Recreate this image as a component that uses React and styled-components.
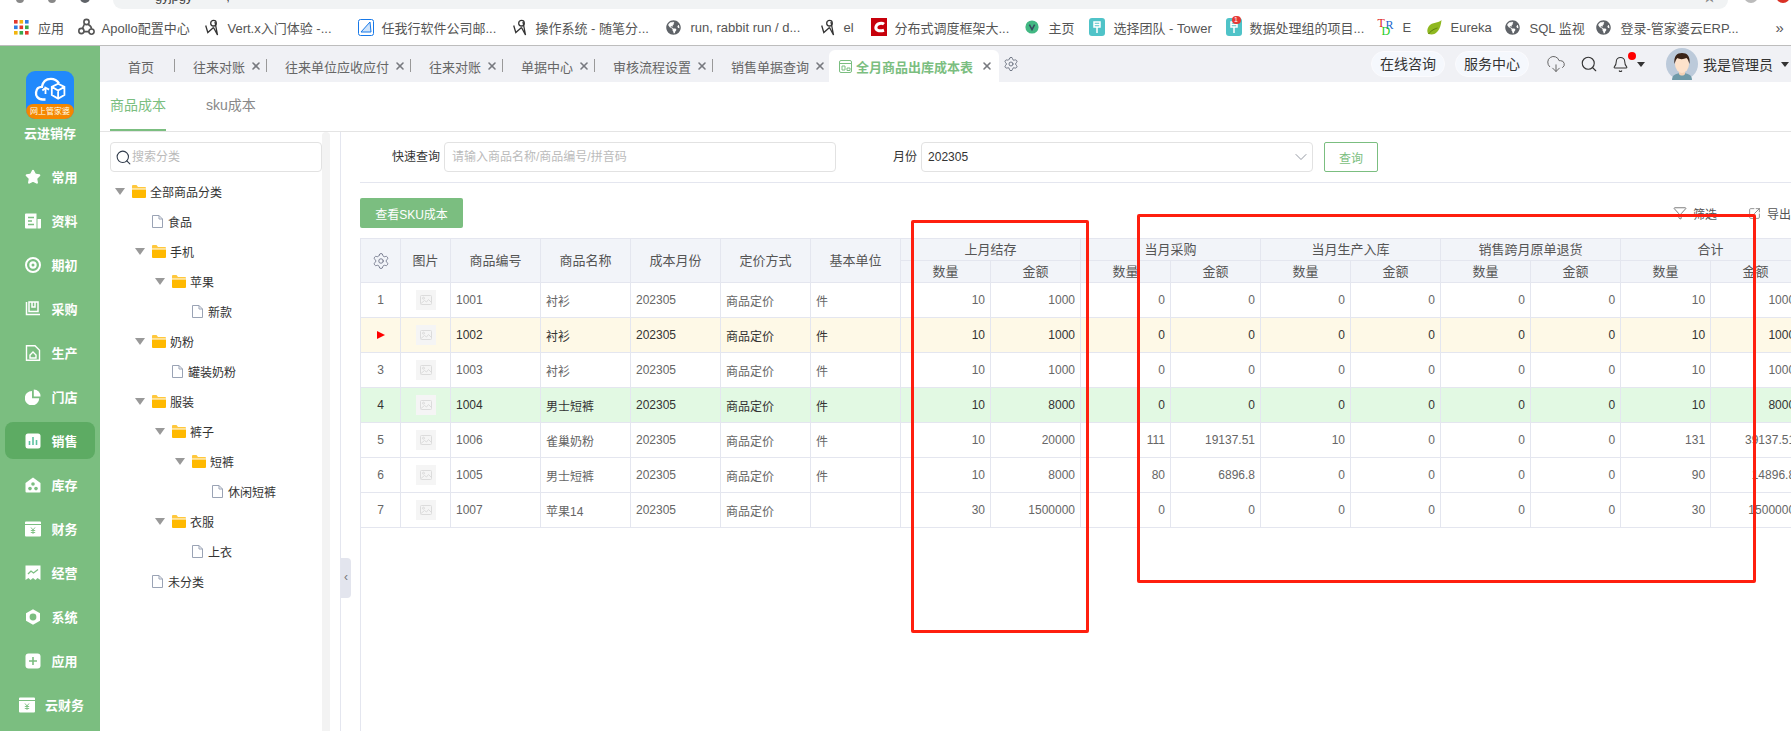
import React from "react";
import styled, { createGlobalStyle } from "styled-components";
import { ChevronDown, CloudDownload, Funnel, Search, Settings, SquareArrowOutUpRight, Star, X, Bell } from "lucide-react";
import { FaGlobeAmericas } from "react-icons/fa";

const GREEN = "#7bbe80";
const LINE = "#e4e6ef";

const GlobalStyle = createGlobalStyle`
  html, body { margin: 0; padding: 0; overflow: hidden; background: #fff; }
  body, input { font-family: "Liberation Sans", "Noto Sans CJK SC", sans-serif; }
  * { box-sizing: border-box; }
`;

const bookmarks = [
  { w: 63.5, icon: "grid", text: "应用", gap: 9 },
  { w: 127, icon: "apollo", text: "Apollo配置中心", gap: 7 },
  { w: 153, icon: "vert", text: "Vert.x入门体验 -...", gap: 9 },
  { w: 155, icon: "mail", text: "任我行软件公司邮...", gap: 8 },
  { w: 153, icon: "vert", text: "操作系统 - 随笔分...", gap: 9 },
  { w: 155, icon: "globe", text: "run, rabbit run / d...", gap: 10 },
  { w: 50, icon: "vert", text: "el", gap: 9 },
  { w: 154, icon: "csdn", text: "分布式调度框架大...", gap: 8 },
  { w: 64, icon: "vue", text: "主页", gap: 10 },
  { w: 137, icon: "tower", text: "选择团队 - Tower", gap: 9 },
  { w: 152, icon: "towerBadge", text: "数据处理组的项目...", gap: 8 },
  { w: 48, icon: "tbd", text: "E", gap: 9 },
  { w: 79, icon: "leaf", text: "Eureka", gap: 9 },
  { w: 91, icon: "globe", text: "SQL 监视", gap: 10 },
  { w: 177, icon: "globe", text: "登录-管家婆云ERP...", gap: 10 },
];

const BookmarkIcon = ({ name }) => {
  if (name === "globe") return <FaGlobeAmericas size={15} color="#5f6368" />;
  if (name === "grid") {
    const colors = ["#e3382c", "#f2b50f", "#2f7de1", "#2f7de1", "#e3382c", "#38a84b", "#f2b50f", "#38a84b", "#e3382c"];
    return (
      <svg width="15" height="15" viewBox="0 0 15 15">
        {colors.map((c, i) => (
          <rect key={i} x={(i % 3) * 5.5} y={Math.floor(i / 3) * 5.5} width="3.6" height="3.6" fill={c} />
        ))}
      </svg>
    );
  }
  if (name === "apollo") {
    return (
      <svg width="17" height="18" viewBox="0 0 17 18" fill="none" stroke="#555" strokeWidth="1.6">
        <circle cx="8.5" cy="4" r="2.6" />
        <circle cx="3.4" cy="13" r="2.6" />
        <circle cx="13.5" cy="13.6" r="2.6" />
        <path d="M6.5 6 4.4 10.6M10 6.3c2.6 1.4 3.6 3.4 3.500 4.800M6 13.600h5" />
      </svg>
    );
  }
  if (name === "vert") {
    return (
      <svg width="14" height="17" viewBox="0 0 14 17" fill="none" stroke="#333" strokeWidth="1.3">
        <path d="M.7 6.500 2.800 13.500 8.500 8.500M8.500 8.500 12.500 16 10 3" />
        <circle cx="8.500" cy="4.200" r="2.800" />
      </svg>
    );
  }
  if (name === "mail") {
    return (
      <svg width="16" height="17" viewBox="0 0 16 17">
        <rect x=".5" y=".5" width="15" height="16" rx="2" fill="#fff" stroke="#1778e8" />
        <path d="M3 13 12 3l1 10z" fill="#cfe4fb" stroke="#1778e8" />
      </svg>
    );
  }
  if (name === "csdn") {
    return (
      <svg width="16" height="18" viewBox="0 0 16 18">
        <rect width="16" height="18" fill="#c7000b" />
        <path d="M13 6.200C11 4.600 6 5 5 8.600s3 5.200 8 3.600" fill="none" stroke="#fff" strokeWidth="3" />
      </svg>
    );
  }
  if (name === "vue") {
    return (
      <svg width="14" height="14" viewBox="0 0 14 14">
        <circle cx="7" cy="7" r="6.600" fill="#42b883" />
        <path d="M4.400 4.600 7 9.600l2.600-5" fill="none" stroke="#35495e" strokeWidth="1.500" />
      </svg>
    );
  }
  if (name === "tower" || name === "towerBadge") {
    return (
      <Badged>
        <svg width="16" height="18" viewBox="0 0 16 18">
          <rect width="16" height="18" rx="3" fill="#4fc3c8" />
          <path d="M5 4h6v5H5zM8 9v6M5.500 6.500h5" fill="none" stroke="#fff" strokeWidth="1.500" />
        </svg>
        {name === "towerBadge" && <IconBadge>1</IconBadge>}
      </Badged>
    );
  }
  if (name === "tbd") {
    return (
      <TbdLogo>
        <TbdLetter $color="#e02020" $x={0} $y={0}>T</TbdLetter>
        <TbdLetter $color="#2266cc" $x={8} $y={2}>R</TbdLetter>
        <TbdLetter $color="#22cc22" $x={4} $y={8}>D</TbdLetter>
      </TbdLogo>
    );
  }
  if (name === "leaf") {
    return (
      <svg width="16" height="17" viewBox="0 0 16 17">
        <path d="M15.500 1C13 4 6 3 3 7 .8 10 1 13.500 2.500 15c6 2 12-2 13-14z" fill="#8fb820" />
        <path d="M2.500 15c3-4 6-5 9-6" fill="none" stroke="#5d7c10" strokeWidth="1" />
      </svg>
    );
  }
  return null;
};

const navItems = [
  { label: "常用", icon: "star" },
  { label: "资料", icon: "doc" },
  { label: "期初", icon: "disc" },
  { label: "采购", icon: "book" },
  { label: "生产", icon: "house" },
  { label: "门店", icon: "pie" },
  { label: "销售", icon: "bars", active: true },
  { label: "库存", icon: "store" },
  { label: "财务", icon: "money" },
  { label: "经营", icon: "ribbon" },
  { label: "系统", icon: "hex" },
  { label: "应用", icon: "plus" },
  { label: "云财务", icon: "money" },
];

const NavIcon = ({ name }) => {
  const common = { width: 16, height: 16, viewBox: "0 0 16 16", style: { flexShrink: 0 } };
  switch (name) {
    case "star":
      return <Star size={16} fill="#fff" color="#fff" style={{ flexShrink: 0 }} />;
    case "doc":
      return (
        <svg {...common}>
          <path d="M0 1.500A1 1 0 0 1 1 .5h10.500v15H1a1 1 0 0 1-1-1zM12.500 6H16v8.500a1 1 0 0 1-1 1h-2.500z" fill="#fff" />
          <path d="M3 4.500h6M3 8h4M3 11.500h6" stroke={GREEN} strokeWidth="1.400" />
        </svg>
      );
    case "disc":
      return (
        <svg {...common} fill="none" stroke="#fff">
          <circle cx="8" cy="8" r="7" strokeWidth="2" />
          <circle cx="8" cy="8" r="2.600" strokeWidth="2.200" />
        </svg>
      );
    case "book":
      return (
        <svg {...common} fill="none" stroke="#fff" strokeWidth="1.500">
          <path d="M1.500 1v12.500H15M4 1h9v9.500H4z" />
          <path d="M7 1v5h3V1" />
        </svg>
      );
    case "house":
      return (
        <svg {...common} fill="none" stroke="#fff" strokeWidth="1.400">
          <path d="M1.500.8h8.500l4.500 4.500v9.900h-13z" />
          <path d="M5 10l3-3 3 3v3H5z" />
        </svg>
      );
    case "pie":
      return (
        <svg {...common} fill="#fff">
          <path d="M7 2v7.200h7.200A7.200 7.200 0 1 1 7 2z" />
          <path d="M8.800.4A7 7 0 0 1 15.600 7.400H8.800z" />
        </svg>
      );
    case "bars":
      return (
        <svg {...common}>
          <rect x=".5" y=".5" width="15" height="15" rx="2.500" fill="#fff" />
          <path d="M4.500 12V8M8 12V4M11.500 12V7" stroke="#5cc2a0" strokeWidth="1.600" />
        </svg>
      );
    case "store":
      return (
        <svg {...common}>
          <path d="M8 .6 15.500 6v8.400a1 1 0 0 1-1 1h-13a1 1 0 0 1-1-1V6z" fill="#fff" />
          <circle cx="8" cy="7" r="1.800" fill={GREEN} />
          <circle cx="5" cy="11.600" r="1.800" fill={GREEN} />
          <circle cx="11" cy="11.600" r="1.800" fill={GREEN} />
        </svg>
      );
    case "money":
      return (
        <svg {...common}>
          <path d="M0 1.500a1 1 0 0 1 1-1h14a1 1 0 0 1 1 1V3H0zM0 4h16v10.500a1 1 0 0 1-1 1H1a1 1 0 0 1-1-1z" fill="#fff" />
          <path d="M6 6.500 8 9l2-2.500M5.800 9.500h4.400M5.800 11.500h4.400M8 9v4" stroke={GREEN} strokeWidth=".9" fill="none" />
        </svg>
      );
    case "ribbon":
      return (
        <svg {...common}>
          <path d="M.5.5h15V15l-3-2-2 2-2.500-2-2.500 2-2-2-3 2z" fill="#fff" />
          <path d="M3 9l3-3 2.500 2L13 4.500" stroke={GREEN} strokeWidth="1.300" fill="none" />
        </svg>
      );
    case "hex":
      return (
        <svg {...common}>
          <path d="M8 .3 15 4.200v7.600L8 15.700 1 11.800V4.200z" fill="#fff" />
          <circle cx="8" cy="8" r="3.400" fill={GREEN} />
        </svg>
      );
    case "plus":
      return (
        <svg {...common}>
          <rect x=".5" y=".5" width="15" height="15" rx="3" fill="#fff" />
          <path d="M8 4v8M4 8h8" stroke={GREEN} strokeWidth="1.600" />
        </svg>
      );
    default:
      return null;
  }
};

const tabs = [
  { label: "首页", plain: true },
  { label: "往来对账" },
  { label: "往来单位应收应付" },
  { label: "往来对账" },
  { label: "单据中心" },
  { label: "审核流程设置" },
  { label: "销售单据查询", last: true },
];

const tree = [
  { label: "全部商品分类", level: 0, folder: true },
  { label: "食品", level: 1 },
  { label: "手机", level: 1, folder: true },
  { label: "苹果", level: 2, folder: true },
  { label: "新款", level: 3 },
  { label: "奶粉", level: 1, folder: true },
  { label: "罐装奶粉", level: 2 },
  { label: "服装", level: 1, folder: true },
  { label: "裤子", level: 2, folder: true },
  { label: "短裤", level: 3, folder: true },
  { label: "休闲短裤", level: 4 },
  { label: "衣服", level: 2, folder: true },
  { label: "上衣", level: 3 },
  { label: "未分类", level: 1 },
];

const groups = ["上月结存", "当月采购", "当月生产入库", "销售跨月原单退货", "合计"];

const rows = [
  { no: "1", code: "1001", name: "衬衫", unit: "件", nums: [10, 1000, 0, 0, 0, 0, 0, 0, 10, 1000] },
  { no: "2", code: "1002", name: "衬衫", unit: "件", nums: [10, 1000, 0, 0, 0, 0, 0, 0, 10, 1000], tone: "current" },
  { no: "3", code: "1003", name: "衬衫", unit: "件", nums: [10, 1000, 0, 0, 0, 0, 0, 0, 10, 1000] },
  { no: "4", code: "1004", name: "男士短裤", unit: "件", nums: [10, 8000, 0, 0, 0, 0, 0, 0, 10, 8000], tone: "picked" },
  { no: "5", code: "1006", name: "雀巢奶粉", unit: "件", nums: [10, 20000, 111, 19137.51, 10, 0, 0, 0, 131, 39137.51] },
  { no: "6", code: "1005", name: "男士短裤", unit: "件", nums: [10, 8000, 80, 6896.8, 0, 0, 0, 0, 90, 14896.8] },
  { no: "7", code: "1007", name: "苹果14", unit: "", nums: [30, 1500000, 0, 0, 0, 0, 0, 0, 30, 1500000] },
];

const FolderIcon = () => (
  <svg width="14" height="13" viewBox="0 0 14 13" style={{ flexShrink: 0 }}>
    <path d="M0 1a1 1 0 0 1 1-1h3.500l1.500 2h7a1 1 0 0 1 1 1v.5H0z" fill="#ffc83d" />
    <path d="M0 4.500h14V12a1 1 0 0 1-1 1H1a1 1 0 0 1-1-1z" fill="#ffb900" />
  </svg>
);

const FileIcon = () => (
  <svg width="11" height="13" viewBox="0 0 11 13" fill="none" stroke="#9aa3b5" style={{ flexShrink: 0 }}>
    <path d="M.5.5h6.500l3.500 3.500v8.500h-10z" />
    <path d="M7 .5V4h3.500" />
  </svg>
);

const ThumbIcon = () => (
  <svg width="12" height="10" viewBox="0 0 12 10" fill="none" stroke="#dcdcdc">
    <rect x=".5" y=".5" width="11" height="9" rx="1" />
    <circle cx="3.500" cy="3.200" r="1" />
    <path d="M1 8.500 4.500 5.500 6.500 7 8.500 4.500 11 7" />
  </svg>
);

const Avatar = () => (
  <svg width="32" height="32" viewBox="0 0 32 32">
    <circle cx="16" cy="16" r="16" fill="#bccada" />
    <path d="M6 32c0-5 4-7 10-7s10 2 10 7z" fill="#6f9aa8" />
    <path d="M13 21h6v5c-1 2-5 2-6 0z" fill="#f3d2b6" />
    <ellipse cx="16" cy="16" rx="7" ry="9" fill="#fde2cb" />
    <path d="M8.500 16C7.500 8 11 5 16 5s8.500 3 7.500 11c-1-3-1.500-5-3-6-3 1.500-7 1.500-9 0-1.500 1-2 3-3 6z" fill="#3a2418" />
  </svg>
);

const Logo = () => (
  <LogoBox>
    <svg width="36" height="30" viewBox="0 0 36 30" fill="none" stroke="#fff" strokeWidth="2.600">
      <path d="M13 25H10C4 25 2 20.500 2.500 17 3 13 6 11 9 11 10 5 14 2 19 2c4 0 7 2 9 5" />
      <path d="M20 11l7-3.500 7 3.500v9l-7 4-7-4zM20 11l7 4 7-4M27 15v9" strokeWidth="2" />
      <path d="M13 19v-7l4 2M13 12l-3.500 3" strokeWidth="2" />
    </svg>
    <LogoBand>网上管家婆</LogoBand>
  </LogoBox>
);

export default function App() {
  return (
    <Page>
      <GlobalStyle />
      <TopStrip>
        <CutDot $left={16} $size={8} />
        <CutDot $left={24} $size={8} />
        <CutDot $left={24} $size={10} $color="#5f6368" />
        <AddressBar>
          <UrlCrumb>gyjpgy ,</UrlCrumb>
          <AddressStar>★</AddressStar>
        </AddressBar>
        <CutDot $left={16} $size={14} $color="#bbb" />
        <CutDot $left={18} $size={14} $color="#d93025" />
      </TopStrip>

      <BookmarkBar>
        {bookmarks.map((b, i) => (
          <Bookmark key={i} $width={b.w} $gap={b.gap}>
            <BookmarkIcon name={b.icon} />
            <span>{b.text}</span>
          </Bookmark>
        ))}
        <MoreMarks>»</MoreMarks>
      </BookmarkBar>

      <AppBody>
        <Sidebar>
          <Logo />
          <AppTitle>云进销存</AppTitle>
          <NavList>
            {navItems.map((item) => (
              <NavItem key={item.label} $active={item.active}>
                <NavIcon name={item.icon} />
                <span>{item.label}</span>
              </NavItem>
            ))}
          </NavList>
        </Sidebar>

        <Workspace>
          <TabBar>
            {tabs.map((t, i) => (
              <Tab key={i} $plain={t.plain} $last={t.last}>
                <span>{t.label}</span>
                {!t.plain && <TabClose />}
              </Tab>
            ))}
            <ActiveTab>
              <svg width="13" height="14" viewBox="0 0 13 14" fill="none" stroke={GREEN}>
                <rect x=".5" y="1.500" width="12" height="12" rx="1.500" />
                <path d="M.5 4.500h12M3 7h3v4H3zM8 9h3v2.500H8z" />
              </svg>
              <span>全月商品出库成本表</span>
              <TabClose />
            </ActiveTab>
            <TabGear>
              <Settings size={16} color="#6a7280" strokeWidth={1.4} />
            </TabGear>
            <HeaderTools>
              <PillButton>在线咨询</PillButton>
              <PillButton>服务中心</PillButton>
              <ToolIcon $ml={17}>
                <CloudDownload size={20} color="#666" strokeWidth={1.2} />
              </ToolIcon>
              <ToolIcon $ml={14}>
                <Search size={18} color="#333" strokeWidth={1.5} />
              </ToolIcon>
              <ToolIcon $ml={14}>
                <Bell size={17} color="#333" strokeWidth={1.5} />
                <RedDot />
              </ToolIcon>
              <Caret $ml={8} />
              <AvatarWrap>
                <Avatar />
              </AvatarWrap>
              <UserName>我是管理员</UserName>
              <Caret $ml={8} />
            </HeaderTools>
          </TabBar>

          <SubTabs>
            <SubTab $active>商品成本</SubTab>
            <SubTab>sku成本</SubTab>
          </SubTabs>

          <Columns>
            <TreePanel>
              <TreeInner>
                <TreeSearch>
                  <Search size={17} color="#2f3a4a" strokeWidth={1.5} />
                  <TreeSearchInput placeholder="搜索分类" />
                </TreeSearch>
                <TreeList>
                  {tree.map((node, i) => (
                    <TreeRow key={i} $level={node.level}>
                      {node.folder ? (
                        <>
                          <Toggle>
                            <ToggleArrow />
                          </Toggle>
                          <FolderIcon />
                          <FolderLabel>{node.label}</FolderLabel>
                        </>
                      ) : (
                        <>
                          <Toggle />
                          <FileIcon />
                          <LeafLabel>{node.label}</LeafLabel>
                        </>
                      )}
                    </TreeRow>
                  ))}
                </TreeList>
              </TreeInner>
              <TreeScroll />
              <CollapseHandle>‹</CollapseHandle>
            </TreePanel>

            <Main>
              <QueryRow>
                <QueryLabel $ml={51}>快速查询</QueryLabel>
                <QueryInput placeholder="请输入商品名称/商品编号/拼音码" />
                <QueryLabel $ml={57}>月份</QueryLabel>
                <MonthSelect>
                  <span>202305</span>
                  <ChevronDown size={20} color="#8a8f99" strokeWidth={1.1} />
                </MonthSelect>
                <QueryButton>查询</QueryButton>
              </QueryRow>

              <Toolbar>
                <PrimaryButton>查看SKU成本</PrimaryButton>
                <ToolLinks>
                  <ToolLink>
                    <Funnel size={14} color="#555" strokeWidth={1.3} />
                    筛选
                  </ToolLink>
                  <ToolLink>
                    <SquareArrowOutUpRight size={13} color="#666" strokeWidth={1.3} />
                    导出
                  </ToolLink>
                </ToolLinks>
              </Toolbar>

              <TableWrap>
                <CostTable>
                  <colgroup>
                    <col width="40" />
                    <col width="50" />
                    {Array.from({ length: 15 }).map((_, i) => (
                      <col key={i} width="90" />
                    ))}
                  </colgroup>
                  <thead>
                    <tr>
                      <HeadCell rowSpan={2}>
                        <Settings size={18} color="#6f7488" strokeWidth={1.2} />
                      </HeadCell>
                      <HeadCell rowSpan={2}>图片</HeadCell>
                      <HeadCell rowSpan={2}>商品编号</HeadCell>
                      <HeadCell rowSpan={2}>商品名称</HeadCell>
                      <HeadCell rowSpan={2}>成本月份</HeadCell>
                      <HeadCell rowSpan={2}>定价方式</HeadCell>
                      <HeadCell rowSpan={2}>基本单位</HeadCell>
                      {groups.map((g) => (
                        <HeadCell key={g} colSpan={2}>
                          {g}
                        </HeadCell>
                      ))}
                    </tr>
                    <tr>
                      {groups.map((g) => (
                        <React.Fragment key={g}>
                          <HeadCell>数量</HeadCell>
                          <HeadCell>金额</HeadCell>
                        </React.Fragment>
                      ))}
                    </tr>
                  </thead>
                  <tbody>
                    {rows.map((r) => (
                      <DataRow key={r.code} $tone={r.tone}>
                        <NoCell>{r.tone === "current" ? <CurrentMark /> : r.no}</NoCell>
                        <NoCell>
                          <Thumb>
                            <ThumbIcon />
                          </Thumb>
                        </NoCell>
                        <TextCell>{r.code}</TextCell>
                        <TextCell>{r.name}</TextCell>
                        <TextCell>202305</TextCell>
                        <TextCell>商品定价</TextCell>
                        <TextCell>{r.unit}</TextCell>
                        {r.nums.map((n, i) => (
                          <NumCell key={i}>{n}</NumCell>
                        ))}
                      </DataRow>
                    ))}
                  </tbody>
                </CostTable>
              </TableWrap>
            </Main>
          </Columns>
        </Workspace>
      </AppBody>

      <RedFrame $x={911} $y={220} $w={178} $h={413} />
      <RedFrame $x={1137} $y={214} $w={619} $h={369} />
    </Page>
  );
}

const CloseGlyph = styled(X)`
  flex-shrink: 0;
  margin: 0 -0.5px;
`;

const TabClose = () => <CloseGlyph size={12} strokeWidth={3.2} color="#77797f" />;

const Page = styled.div`
  position: relative;
  width: 1791px;
  height: 731px;
  overflow: hidden;
  display: flex;
  flex-direction: column;
  background: #fff;
`;

const TopStrip = styled.div`
  height: 9px;
  display: flex;
  overflow: hidden;
  flex-shrink: 0;
`;

const CutDot = styled.div`
  width: ${(p) => p.$size}px;
  height: ${(p) => p.$size}px;
  margin-left: ${(p) => p.$left}px;
  margin-top: ${(p) => 3 - p.$size}px;
  border-radius: 50%;
  background: ${(p) => p.$color || "#888"};
  flex-shrink: 0;
`;

const AddressBar = styled.div`
  width: 1615px;
  margin-left: 23px;
  height: 9px;
  background: #f1f3f4;
  border-radius: 0 0 12px 12px;
  display: flex;
  justify-content: space-between;
  overflow: hidden;
  padding: 0 12px 0 42px;
  flex-shrink: 0;
`;

const UrlCrumb = styled.span`
  margin-top: -10px;
  font-size: 13px;
  line-height: 13px;
  color: #444;
  word-spacing: 30px;
`;

const AddressStar = styled.span`
  margin-top: -10px;
  font-size: 13px;
  line-height: 13px;
  color: #888;
`;

const BookmarkBar = styled.div`
  height: 37px;
  padding-left: 14px;
  display: flex;
  align-items: center;
  border-bottom: 1px solid #bdbdbd;
  flex-shrink: 0;
`;

const Bookmark = styled.div`
  width: ${(p) => p.$width}px;
  display: flex;
  align-items: center;
  gap: ${(p) => p.$gap}px;
  font-size: 13px;
  color: #555;
  white-space: nowrap;
  flex-shrink: 0;
`;

const Badged = styled.div`
  position: relative;
  height: 18px;
`;

const IconBadge = styled.span`
  position: absolute;
  top: -2px;
  right: 1px;
  width: 9px;
  height: 8px;
  border-radius: 4px;
  background: #e53935;
  color: #fff;
  font-size: 7px;
  line-height: 8px;
  text-align: center;
`;

const TbdLogo = styled.div`
  position: relative;
  width: 16px;
  height: 18px;
`;

const TbdLetter = styled.span`
  position: absolute;
  left: ${(p) => p.$x}px;
  top: ${(p) => p.$y}px;
  font-family: "Liberation Serif", serif;
  font-size: 12px;
  line-height: 10px;
  color: ${(p) => p.$color};
`;

const MoreMarks = styled.div`
  margin-left: 3px;
  font-size: 15px;
  color: #555;
`;

const AppBody = styled.div`
  flex: 1;
  display: flex;
  min-height: 0;
`;

const Sidebar = styled.aside`
  width: 100px;
  flex-shrink: 0;
  background: ${GREEN};
  padding-top: 25px;
  display: flex;
  flex-direction: column;
  align-items: center;
`;

const LogoBox = styled.div`
  width: 48px;
  height: 48px;
  border-radius: 9px;
  background: #2189fb;
  overflow: hidden;
  display: flex;
  flex-direction: column;
  align-items: center;
  justify-content: space-between;
  padding-top: 6px;
`;

const LogoBand = styled.div`
  width: 100%;
  height: 15px;
  background: #f58700;
  border-radius: 7px 7px 0 0;
  color: #ffe;
  font-size: 8px;
  line-height: 15px;
  text-align: center;
  white-space: nowrap;
`;

const AppTitle = styled.div`
  margin-top: 5px;
  height: 20px;
  font-size: 13px;
  line-height: 20px;
  font-weight: 700;
  color: #fff;
`;

const NavList = styled.nav`
  margin-top: 14px;
  width: 100%;
  padding: 0 5px;
  display: flex;
  flex-direction: column;
  gap: 7px;
`;

const NavItem = styled.div`
  height: 37px;
  padding-left: 3px;
  display: flex;
  align-items: center;
  justify-content: center;
  gap: 10px;
  border-radius: 8px;
  font-size: 13px;
  font-weight: 700;
  color: #fff;
  background: ${(p) => (p.$active ? "#5dab63" : "transparent")};
`;

const Workspace = styled.div`
  flex: 1;
  min-width: 0;
  display: flex;
  flex-direction: column;
`;

const TabBar = styled.div`
  height: 36px;
  background: #f0f1f5;
  display: flex;
  align-items: flex-end;
  padding-left: 10px;
  flex-shrink: 0;
`;

const Tab = styled.div`
  height: 32px;
  display: flex;
  align-items: center;
  gap: 5px;
  padding-left: 18px;
  padding-right: ${(p) => (p.$plain ? 21 : 6)}px;
  font-size: 13px;
  color: #666;
  position: relative;
  white-space: nowrap;
  &::after {
    content: "";
    display: ${(p) => (p.$last ? "none" : "block")};
    position: absolute;
    right: 0;
    top: 9px;
    height: 13px;
    width: 1px;
    background: #999;
  }
`;

const ActiveTab = styled.div`
  height: 32px;
  width: 170px;
  margin-left: -2px;
  padding-left: 10px;
  background: #fff;
  border-radius: 6px 6px 0 0;
  display: flex;
  align-items: center;
  font-size: 13px;
  color: ${GREEN};
  white-space: nowrap;
  & > span {
    margin: 0 8px 0 4px;
    font-weight: 700;
  }
`;

const TabGear = styled.div`
  margin-left: 4px;
  height: 36px;
  display: flex;
  align-items: center;
`;

const HeaderTools = styled.div`
  margin-left: auto;
  height: 36px;
  display: flex;
  align-items: center;
  padding-right: 2px;
`;

const PillButton = styled.div`
  width: 74px;
  height: 26px;
  margin-left: 10px;
  border-radius: 13px;
  background: #f5f8fd;
  border: 1px solid #fbfbfe;
  font-size: 14px;
  line-height: 24px;
  text-align: center;
  color: #333;
`;

const ToolIcon = styled.div`
  position: relative;
  margin-left: ${(p) => p.$ml}px;
  display: flex;
`;

const RedDot = styled.span`
  position: absolute;
  top: -4px;
  right: -7px;
  width: 8px;
  height: 8px;
  border-radius: 50%;
  background: #f00;
`;

const Caret = styled.span`
  margin-left: ${(p) => p.$ml}px;
  width: 0;
  height: 0;
  border-left: 4px solid transparent;
  border-right: 4px solid transparent;
  border-top: 5px solid #333;
`;

const AvatarWrap = styled.div`
  margin-left: 21px;
  width: 32px;
  height: 32px;
`;

const UserName = styled.div`
  margin-left: 5px;
  font-size: 14px;
  color: #333;
`;

const SubTabs = styled.div`
  height: 50px;
  padding-left: 10px;
  display: flex;
  gap: 40px;
  border-bottom: 1px solid #e4e4e4;
  flex-shrink: 0;
`;

const SubTab = styled.div`
  height: 49px;
  line-height: 46px;
  font-size: 14px;
  color: ${(p) => (p.$active ? GREEN : "#888")};
  border-bottom: 2px solid ${(p) => (p.$active ? GREEN : "transparent")};
`;

const Columns = styled.div`
  flex: 1;
  display: flex;
  min-height: 0;
`;

const TreePanel = styled.div`
  position: relative;
  width: 241px;
  flex-shrink: 0;
  display: flex;
  border-right: 1px solid ${LINE};
`;

const TreeInner = styled.div`
  width: 222px;
  padding: 10px 0 0 10px;
`;

const TreeSearch = styled.div`
  height: 30px;
  display: flex;
  align-items: center;
  padding-left: 4px;
  border: 1px solid #e2e2e2;
  border-radius: 4px;
`;

const TreeSearchInput = styled.input`
  flex: 1;
  min-width: 0;
  border: 0;
  outline: 0;
  padding: 0;
  font-size: 12px;
  background: transparent;
  &::placeholder {
    color: #bbb;
  }
`;

const TreeList = styled.div`
  margin-top: 4px;
  padding-left: 5px;
`;

const TreeRow = styled.div`
  height: 30px;
  padding-left: ${(p) => p.$level * 20}px;
  display: flex;
  align-items: center;
  font-size: 12px;
  color: #333;
  white-space: nowrap;
`;

const Toggle = styled.span`
  width: 17px;
  flex-shrink: 0;
`;

const ToggleArrow = styled.span`
  display: block;
  width: 0;
  height: 0;
  border-left: 5px solid transparent;
  border-right: 5px solid transparent;
  border-top: 7px solid #999;
`;

const FolderLabel = styled.span`
  margin-left: 4px;
`;

const LeafLabel = styled.span`
  margin-left: 5px;
`;

const TreeScroll = styled.div`
  width: 8px;
  background: #f3f3f3;
  border-radius: 4px 4px 0 0;
`;

const CollapseHandle = styled.div`
  position: absolute;
  right: -11px;
  top: 426px;
  width: 10px;
  height: 40px;
  border-radius: 0 4px 4px 0;
  background: #e3e5ee;
  color: #777;
  font-size: 12px;
  line-height: 38px;
  text-align: center;
`;

const Main = styled.main`
  flex: 1;
  min-width: 0;
  padding-left: 19px;
  display: flex;
  flex-direction: column;
`;

const QueryRow = styled.div`
  height: 51px;
  margin-left: -19px;
  padding-top: 10px;
  display: flex;
  align-items: flex-start;
  position: relative;
  &::after {
    content: "";
    position: absolute;
    left: 19px;
    right: 0;
    bottom: 0;
    height: 1px;
    background: ${LINE};
  }
`;

const QueryLabel = styled.label`
  margin-left: ${(p) => p.$ml}px;
  margin-right: 4px;
  font-size: 12px;
  line-height: 30px;
  color: #333;
`;

const QueryInput = styled.input`
  width: 392px;
  height: 30px;
  padding: 0 7px;
  border: 1px solid #e2e2e2;
  border-radius: 4px;
  outline: 0;
  font-size: 12px;
  &::placeholder {
    color: #bbb;
  }
`;

const MonthSelect = styled.div`
  width: 392px;
  height: 30px;
  padding: 0 1px 0 6px;
  display: flex;
  align-items: center;
  justify-content: space-between;
  border: 1px solid #e2e2e2;
  border-radius: 4px;
  font-size: 12px;
  color: #333;
`;

const QueryButton = styled.button`
  width: 54px;
  height: 30px;
  margin-left: 11px;
  border: 1px solid ${GREEN};
  border-radius: 2px;
  background: #fff;
  color: ${GREEN};
  font: inherit;
  font-size: 12px;
`;

const Toolbar = styled.div`
  margin-top: 15px;
  height: 30px;
  display: flex;
  align-items: center;
  justify-content: space-between;
  flex-shrink: 0;
`;

const PrimaryButton = styled.button`
  width: 103px;
  height: 30px;
  padding: 0;
  border: 0;
  border-radius: 2px;
  background: ${GREEN};
  color: #fff;
  font: inherit;
  font-size: 12px;
`;

const ToolLinks = styled.div`
  display: flex;
  gap: 31px;
`;

const ToolLink = styled.div`
  display: flex;
  align-items: center;
  gap: 6px;
  font-size: 12px;
  color: #555;
  white-space: nowrap;
`;

const TableWrap = styled.div`
  margin-top: 10px;
  flex: 1;
  min-height: 0;
  overflow: hidden;
  border-left: 1px solid ${LINE};
  border-top: 1px solid ${LINE};
`;

const CostTable = styled.table`
  width: 1440px;
  table-layout: fixed;
  border-collapse: separate;
  border-spacing: 0;
  font-size: 12px;
`;

const HeadCell = styled.th`
  height: 22px;
  padding: 0;
  font-size: 13px;
  font-weight: 400;
  color: #555;
  background: #f2f4f9;
  border-right: 1px solid ${LINE};
  border-bottom: 1px solid ${LINE};
  text-align: center;
  vertical-align: middle;
  line-height: 20px;
  & svg {
    vertical-align: middle;
  }
`;

const DataRow = styled.tr`
  height: 35px;
  background: ${(p) => (p.$tone === "current" ? "#fef9e7" : p.$tone === "picked" ? "#e2f9e3" : "#fff")};
  color: ${(p) => (p.$tone ? "#333" : "#666")};
`;

const TextCell = styled.td`
  padding: 0 5px;
  border-right: 1px solid ${LINE};
  border-bottom: 1px solid ${LINE};
  white-space: nowrap;
`;

const NoCell = styled(TextCell)`
  padding: 0;
  text-align: center;
`;

const NumCell = styled(TextCell)`
  text-align: right;
`;

const Thumb = styled.div`
  width: 20px;
  height: 20px;
  margin: 0 auto;
  background: #f5f5f5;
  display: flex;
  align-items: center;
  justify-content: center;
`;

const CurrentMark = styled.span`
  display: inline-block;
  width: 0;
  height: 0;
  border-top: 4px solid transparent;
  border-bottom: 4px solid transparent;
  border-left: 8px solid #f00;
`;

const RedFrame = styled.div`
  position: absolute;
  left: ${(p) => p.$x}px;
  top: ${(p) => p.$y}px;
  width: ${(p) => p.$w}px;
  height: ${(p) => p.$h}px;
  border: 3px solid #ff1f0f;
  border-radius: 2px;
  pointer-events: none;
`;
